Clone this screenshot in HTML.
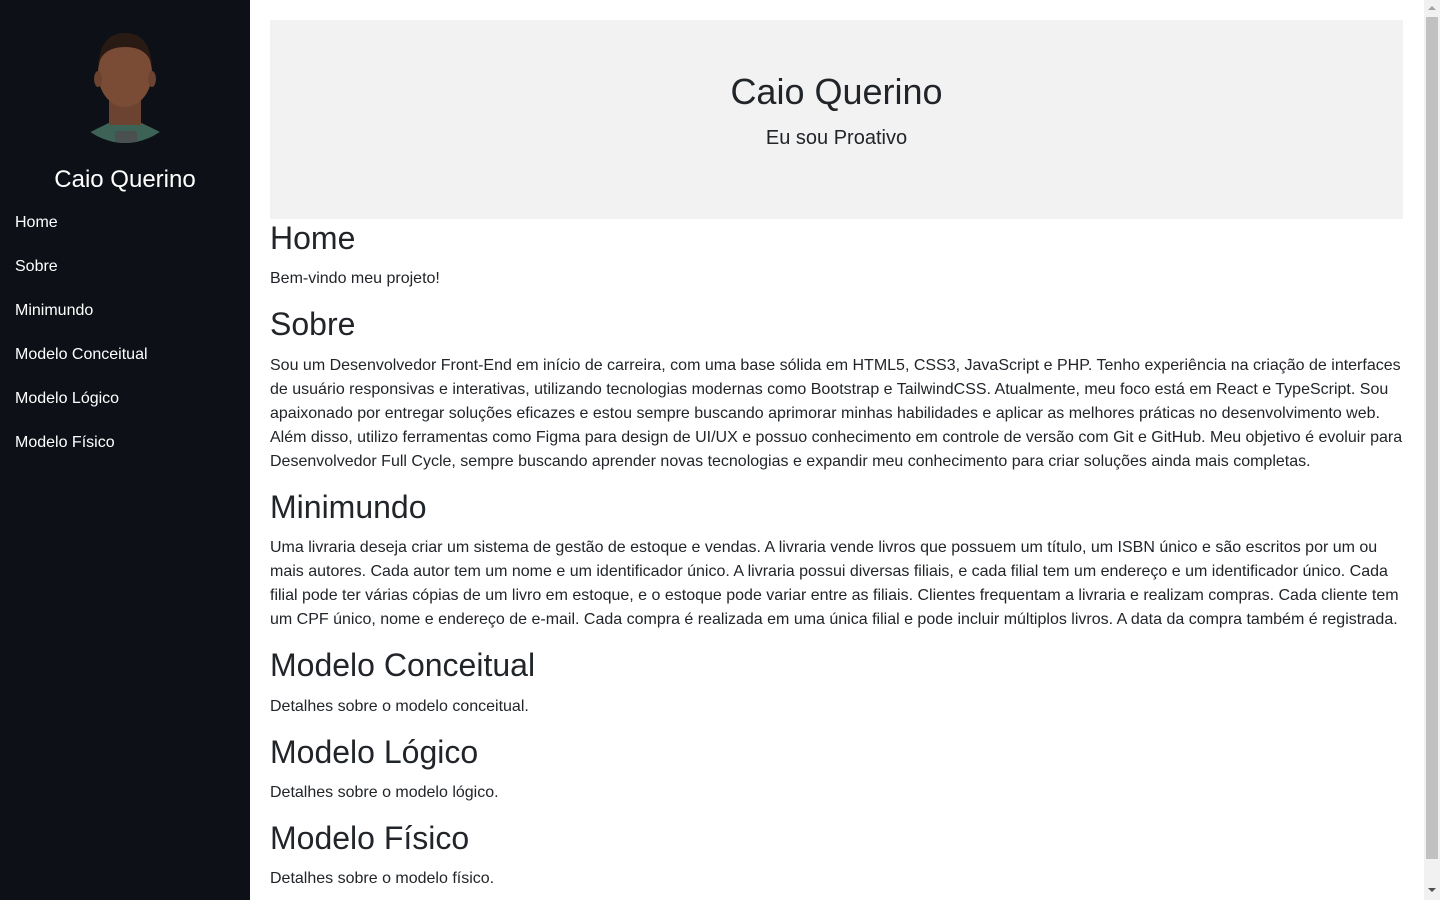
<!DOCTYPE html>
<html><head><meta charset="utf-8"><style>
*{box-sizing:border-box}
html,body{margin:0;height:900px;overflow:hidden}
body{font-family:"Liberation Sans",Arial,sans-serif;color:#212529;font-size:16px;line-height:24px;background:#fff}
.side{position:fixed;left:0;top:0;width:250px;height:900px;background:#0d1117;color:#fff}
.av{position:absolute;left:65px;top:23px;width:120px;height:120px;border-radius:50%;overflow:hidden}
.name{position:absolute;top:164px;width:250px;text-align:center;font-size:24px;line-height:32px}
.nav{position:absolute;top:211px;left:15px}
.nav div{height:44px;line-height:24px;font-size:16px}
.main{position:absolute;left:270px;top:20px;width:1133px}
.jumbo{background:#f2f2f2;height:199px;text-align:center;padding-top:50px}
.jumbo h1{margin:0;font-size:36px;font-weight:400;line-height:43px}
.jumbo p{margin:11px 0 0;font-size:20px;line-height:28px}
h2{font-size:32px;font-weight:400;line-height:38.4px;margin:0 0 10px}
p{margin:0 0 14px}
.sb{position:fixed;right:0;top:0;width:16px;height:900px;background:#f1f1f1}
.th{position:absolute;left:2px;top:17px;width:12px;height:842px;background:#c1c1c1}
.up{position:absolute;left:4px;top:6px;width:0;height:0;border-left:4px solid transparent;border-right:4px solid transparent;border-bottom:4px solid #a3a3a3}
.dn{position:absolute;left:4px;top:888px;width:0;height:0;border-left:4px solid transparent;border-right:4px solid transparent;border-top:4px solid #505050}
</style></head><body>
<div class="side">
<div class="av"><svg width="120" height="120" viewBox="0 0 120 120">
<rect width="120" height="120" fill="#0d1117"/>
<path d="M0 128 L8 118 Q35 104 48 98 L72 98 Q90 106 112 118 L120 128Z" fill="#3d6256"/>
<rect x="44" y="74" width="32" height="28" fill="#6b4330"/>
<ellipse cx="60" cy="50" rx="27" ry="34" fill="#7a4c35"/>
<ellipse cx="33" cy="56" rx="4" ry="8" fill="#6b4330"/>
<ellipse cx="87" cy="56" rx="4" ry="8" fill="#6b4330"/>
<path d="M33 42 Q36 10 60 10 Q84 10 87 42 Q82 24 60 24 Q38 24 33 42Z" fill="#2a1a14"/>
<rect x="50" y="108" width="22" height="14" rx="2" fill="#4a5050"/>
</svg></div>
<div class="name">Caio Querino</div>
<div class="nav"><div>Home</div><div>Sobre</div><div>Minimundo</div><div>Modelo Conceitual</div><div>Modelo Lógico</div><div>Modelo Físico</div></div>
</div>
<div class="main">
<div class="jumbo"><h1>Caio Querino</h1><p>Eu sou Proativo</p></div>
<h2>Home</h2><p>Bem-vindo meu projeto!</p>
<h2>Sobre</h2><p>Sou um Desenvolvedor Front-End em início de carreira, com uma base sólida em HTML5, CSS3, JavaScript e PHP. Tenho experiência na criação de interfaces de usuário responsivas e interativas, utilizando tecnologias modernas como Bootstrap e TailwindCSS. Atualmente, meu foco está em React e TypeScript. Sou apaixonado por entregar soluções eficazes e estou sempre buscando aprimorar minhas habilidades e aplicar as melhores práticas no desenvolvimento web. Além disso, utilizo ferramentas como Figma para design de UI/UX e possuo conhecimento em controle de versão com Git e GitHub. Meu objetivo é evoluir para Desenvolvedor Full Cycle, sempre buscando aprender novas tecnologias e expandir meu conhecimento para criar soluções ainda mais completas.</p>
<h2>Minimundo</h2><p>Uma livraria deseja criar um sistema de gestão de estoque e vendas. A livraria vende livros que possuem um título, um ISBN único e são escritos por um ou mais autores. Cada autor tem um nome e um identificador único. A livraria possui diversas filiais, e cada filial tem um endereço e um identificador único. Cada filial pode ter várias cópias de um livro em estoque, e o estoque pode variar entre as filiais. Clientes frequentam a livraria e realizam compras. Cada cliente tem um CPF único, nome e endereço de e-mail. Cada compra é realizada em uma única filial e pode incluir múltiplos livros. A data da compra também é registrada.</p>
<h2>Modelo Conceitual</h2><p>Detalhes sobre o modelo conceitual.</p>
<h2>Modelo Lógico</h2><p>Detalhes sobre o modelo lógico.</p>
<h2>Modelo Físico</h2><p>Detalhes sobre o modelo físico.</p>
</div>
<div class="sb"><div class="up"></div><div class="th"></div><div class="dn"></div></div>
</body></html>
